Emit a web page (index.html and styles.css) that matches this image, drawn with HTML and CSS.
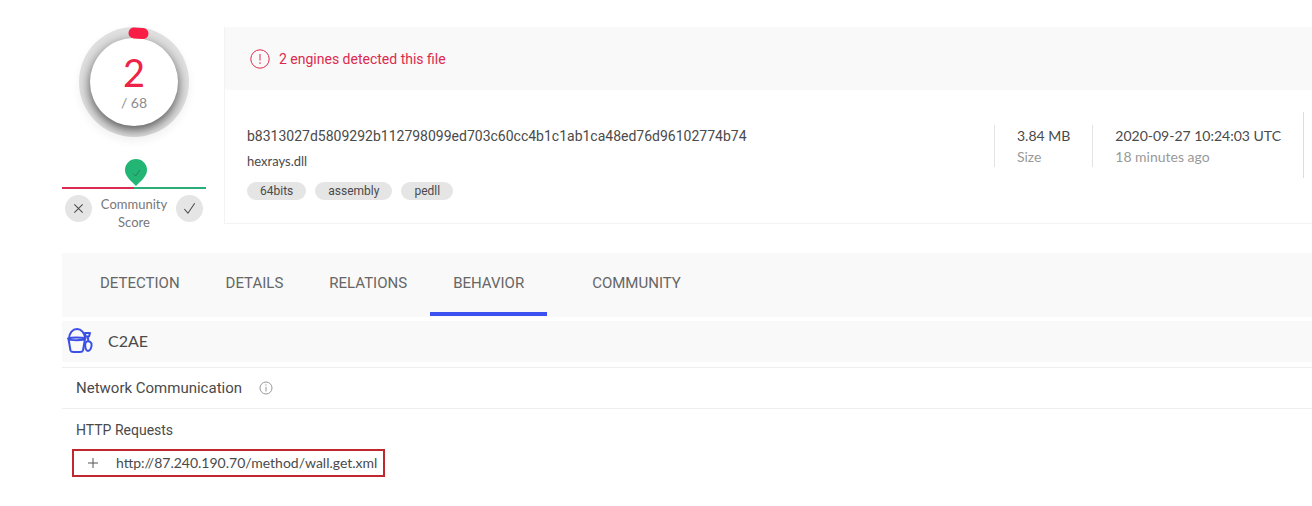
FILE: index.html
```html
<!DOCTYPE html>
<html lang="en">
<head>
<meta charset="utf-8">
<title>hexrays.dll - Behavior</title>
<link rel="stylesheet" href="styles.css">
</head>
<body>
<main class="report">
  <section class="summary">
    <aside class="score">
      <div class="gauge">
        <svg class="gauge-mark" viewBox="0 0 110 110" aria-hidden="true"><path d="M55 6 L64 6.6"/></svg>
        <div class="gauge-face">
          <span class="gauge-value">2</span>
          <span class="gauge-total">/ 68</span>
        </div>
      </div>
      <svg class="pin" viewBox="0 0 22 27" aria-hidden="true">
        <path class="pin-body" d="M11 0A11 11 0 0 1 22 11C22 17 17 21 11 27C5 21 0 17 0 11A11 11 0 0 1 11 0Z"/>
        <path class="pin-check" d="M8 14.5L10.5 17L15 11"/>
      </svg>
      <div class="score-bar"></div>
      <div class="vote">
        <button class="vote-button" type="button" aria-label="Vote malicious"><svg viewBox="0 0 26 26"><path d="M9 9L17 17M17 9L9 17"/></svg></button>
        <span class="vote-label">Community Score</span>
        <button class="vote-button" type="button" aria-label="Vote harmless"><svg viewBox="0 0 26 26"><path d="M8 13.5L11.5 17.5L18 8"/></svg></button>
      </div>
    </aside>
    <div class="card">
      <div class="alert">
        <svg class="alert-icon" viewBox="0 0 20 20" aria-hidden="true"><circle cx="10" cy="10" r="9.2"/><path d="M10 5V11.5M10 13.2V15"/></svg>
        <span>2 engines detected this file</span>
      </div>
      <div class="file">
        <div class="file-id">
          <div class="hash">b8313027d5809292b112798099ed703c60cc4b1c1ab1ca48ed76d96102774b74</div>
          <div class="file-name">hexrays.dll</div>
          <div class="tags">
            <a class="tag" href="#64bits">64bits</a>
            <a class="tag" href="#assembly">assembly</a>
            <a class="tag" href="#pedll">pedll</a>
          </div>
        </div>
        <div class="facts">
          <div class="fact"><span>3.84 MB</span><span class="muted">Size</span></div>
          <div class="fact"><span>2020-09-27 10:24:03 UTC</span><span class="muted">18 minutes ago</span></div>
          <div class="file-type"></div>
        </div>
      </div>
    </div>
  </section>

  <nav class="tabs">
    <a class="tab" href="#detection">DETECTION</a>
    <a class="tab" href="#details">DETAILS</a>
    <a class="tab" href="#relations">RELATIONS</a>
    <a class="tab tab-active" href="#behavior">BEHAVIOR</a>
    <a class="tab" href="#community">COMMUNITY</a>
  </nav>

  <section class="sandbox">
    <svg class="sandbox-icon" viewBox="0 0 26 26" aria-hidden="true">
      <path d="M2 10C2.500 5 5.500 1 10 1C14.500 1 17.500 5 18 10M1.500 11L3.500 22.500Q4 24 6.500 24H13Q15.500 24 16 22.500L18 11M1 10.500C5 9 14 9 18.500 10.500C16 12.800 4 12.800 1 10.500Z"/>
      <path d="M18 5H23L22 8.500H18.500ZM20.500 8.500L21.500 13M18.500 15C19.500 12.500 23 12.500 24.500 15.500C25 19 23.500 22.500 21 23C18.500 22.500 17.500 18 18.500 15Z"/>
    </svg>
    <span>C2AE</span>
  </section>

  <h2 class="group-title">
    <span>Network Communication</span>
    <svg class="info-icon" viewBox="0 0 14 14" aria-hidden="true"><circle cx="7" cy="7" r="6"/><path d="M7 5.800V10.500M7 3.300V4.500"/></svg>
  </h2>
  <h3 class="list-title">HTTP Requests</h3>
  <button class="request" type="button">
    <svg class="plus-icon" viewBox="0 0 12 12" aria-hidden="true"><path d="M6 1V11M1 6H11"/></svg>
    <span>http://87.240.190.70/method/wall.get.xml</span>
  </button>
</main>
</body>
</html>
```
FILE: styles.css
```css
* { box-sizing: border-box; }
body {
  margin: 0;
  background: #fff;
  color: #4a4a4a;
  font: 14px/20px Lato, "Open Sans", sans-serif;
  overflow-x: hidden;
}
a { color: inherit; text-decoration: none; }
button { font: inherit; color: inherit; }
svg { display: block; fill: none; flex: none; }
.report { padding: 27px 0 28px 62px; }

.summary { display: flex; gap: 18px; align-items: flex-start; }
.score { width: 144px; display: flex; flex-direction: column; align-items: center; }
.gauge {
  position: relative;
  z-index: 1;
  display: grid;
  place-items: center;
  width: 110px;
  height: 110px;
  border-radius: 50%;
  background: #e0e0e0;
  box-shadow: 0 4px 10px rgba(0, 0, 0, .06);
  overflow: hidden;
}
.gauge-mark { position: absolute; inset: 0; stroke: #fa1e46; stroke-width: 11; stroke-linecap: round; }
.gauge-face {
  display: flex;
  flex-direction: column;
  align-items: center;
  gap: 4px;
  width: 88px;
  height: 88px;
  padding-top: 16px;
  border-radius: 50%;
  background: #fff;
  box-shadow: 0 4px 12px rgba(0, 0, 0, .65);
}
.gauge-value { font-size: 38px; line-height: 36px; color: #ed2448; }
.gauge-total { line-height: 18px; color: #8c8c8c; }
.pin { width: 22px; height: 27px; margin-top: 22px; margin-left: 4px; }
.pin-body { fill: #22b573; }
.pin-check { stroke: #2f7d5b; }
.score-bar { width: 100%; height: 2px; margin-top: 1px; background: linear-gradient(90deg, #dc2a55 50%, #2aad78 50%); }
.vote { display: flex; gap: 7px; width: 100%; padding: 6px 3px 0; align-items: flex-start; }
.vote-button { flex: none; width: 27px; height: 27px; padding: 0; border: 0; border-radius: 50%; background: #e5e5e5; }
.vote-button svg { stroke: #4a4a4a; stroke-width: 1; width: 27px; height: 27px; }
.vote-label { flex: 1; text-align: center; font-size: 13px; line-height: 18px; color: #777; }

.card { flex: 1; min-width: 0; border: solid #f3f3f3; border-width: 0 0 1px 1px; }
.alert {
  display: flex;
  align-items: center;
  gap: 9px;
  height: 63px;
  padding-left: 25px;
  background: #f9f9f9;
  color: #dc2a4f;
  font-family: Roboto, sans-serif;
}
.alert-icon { width: 20px; height: 20px; stroke: #dc2a4f; stroke-width: 1; }
.file { display: flex; justify-content: space-between; padding: 22px 0 23px 22px; }
.file-id { padding-top: 14px; }
.hash { font-family: Roboto, sans-serif; }
.file-name { margin-top: 5px; font-size: 13px; }
.tags { display: flex; gap: 9px; margin-top: 11px; }
.tag { padding: 0 13px; border-radius: 9px; background: #e5e5e5; font: 12px/18px Roboto, sans-serif; }
.facts { display: flex; align-items: flex-start; white-space: nowrap; }
.fact { display: flex; flex-direction: column; margin-top: 13px; padding: 0 22px; border-left: 1px solid #e3e3e3; line-height: 21px; }
.muted { color: #999; }
.file-type { width: 9px; height: 66px; border-left: 1px solid #ddd; }

.tabs { display: flex; margin-top: 22px; padding-left: 15px; background: #f9f9f9; font-family: Roboto, sans-serif; color: #666; font-size: 15px; }
.tab { height: 64px; padding: 20px 23px 0; }
.tab-active { margin-right: 22px; background: linear-gradient(#3b52f0, #3b52f0) 0 59px / 100% 4px no-repeat; }

.sandbox { display: flex; align-items: center; gap: 15px; height: 41px; margin-top: 4px; padding: 0 0 2px 5px; background: #f9f9f9; font-size: 16px; }
.sandbox-icon { width: 26px; height: 26px; stroke: #3b4fe4; stroke-width: 2; stroke-linejoin: round; }

.group-title {
  display: flex;
  align-items: center;
  gap: 17px;
  height: 42px;
  margin: 5px 0 0;
  padding-left: 14px;
  border: solid #eee;
  border-width: 1px 0;
  font: 15px/20px Roboto, sans-serif;
}
.info-icon { width: 14px; height: 14px; stroke: #999; stroke-width: 1; }
.list-title { margin: 11px 0 0 14px; font: 14px/20px Roboto, sans-serif; }
.request {
  display: flex;
  align-items: center;
  gap: 17px;
  height: 28px;
  margin: 9px 0 0 10px;
  padding: 0 6px 0 13px;
  border: 2px solid #c0272f;
  background: #fff;
}
.plus-icon { width: 12px; height: 12px; stroke: #555; stroke-width: 1; }
```
